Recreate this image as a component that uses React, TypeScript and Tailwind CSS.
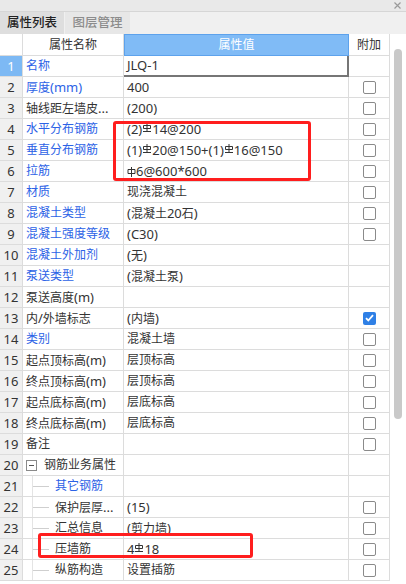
import type { ReactNode } from "react";

type Row = { n: number; name: string; blue?: boolean; value?: string; cb?: "on" | "off"; tree?: "group" | "leaf" };

const rows: Row[] = [
  { n: 1,  name: "名称", blue: true, value: "JLQ-1" },
  { n: 2,  name: "厚度(mm)", blue: true, value: "400", cb: "off" },
  { n: 3,  name: "轴线距左墙皮...", value: "(200)", cb: "off" },
  { n: 4,  name: "水平分布钢筋", blue: true, value: "(2)#14@200", cb: "off" },
  { n: 5,  name: "垂直分布钢筋", blue: true, value: "(1)#20@150+(1)#16@150", cb: "off" },
  { n: 6,  name: "拉筋", blue: true, value: " %6@600*600", cb: "off" },
  { n: 7,  name: "材质", blue: true, value: "现浇混凝土", cb: "off" },
  { n: 8,  name: "混凝土类型", blue: true, value: "(混凝土20石)", cb: "off" },
  { n: 9,  name: "混凝土强度等级", blue: true, value: "(C30)", cb: "off" },
  { n: 10, name: "混凝土外加剂", blue: true, value: "(无)" },
  { n: 11, name: "泵送类型", blue: true, value: "(混凝土泵)" },
  { n: 12, name: "泵送高度(m)" },
  { n: 13, name: "内/外墙标志", value: "(内墙)", cb: "on" },
  { n: 14, name: "类别", blue: true, value: "混凝土墙", cb: "off" },
  { n: 15, name: "起点顶标高(m)", value: "层顶标高", cb: "off" },
  { n: 16, name: "终点顶标高(m)", value: "层顶标高", cb: "off" },
  { n: 17, name: "起点底标高(m)", value: "层底标高", cb: "off" },
  { n: 18, name: "终点底标高(m)", value: "层底标高", cb: "off" },
  { n: 19, name: "备注", cb: "off" },
  { n: 20, name: "钢筋业务属性", tree: "group" },
  { n: 21, name: "其它钢筋", blue: true, tree: "leaf" },
  { n: 22, name: "保护层厚...", value: "(15)", cb: "off", tree: "leaf" },
  { n: 23, name: "汇总信息", value: "(剪力墙)", cb: "off", tree: "leaf" },
  { n: 24, name: "压墙筋", value: "4#18", cb: "off", tree: "leaf" },
  { n: 25, name: "纵筋构造", value: "设置插筋", cb: "off", tree: "leaf" },
];

// HRB400 rebar symbol
const Grade3 = () => (
  <svg width="10" height="9" viewBox="0 0 10 9" className="inline-block align-[2px]" fill="none" stroke="#333" strokeWidth="1">
    <path d="M5 0v8.5M1.5 2.5h7v3h-7zM1 8.5h8" />
  </svg>
);
// HPB300 rebar symbol
const Grade1 = () => (
  <svg width="9" height="10" viewBox="0 0 9 10" className="inline-block align-[-1px]" fill="none" stroke="#333" strokeWidth="1">
    <path d="M4.5 0v10M1 2.5h7v4h-7z" />
  </svg>
);

const cjk = /[\u2e80-\u9fff\uff00-\uffef]/;

// latin runs a touch larger than the CJK ones, like YaHei does
function runs(s: string, k: string): ReactNode[] {
  const out: ReactNode[] = [];
  let buf = "", isC: boolean | null = null, i = 0;
  const flush = () => {
    if (!buf) return;
    out.push(isC ? <span key={k + i++}>{buf}</span> : <span key={k + i++} className="text-[13px]">{buf}</span>);
    buf = "";
  };
  for (const ch of s) {
    const c = cjk.test(ch);
    if (isC !== null && c !== isC) flush();
    isC = c; buf += ch;
  }
  flush();
  return out;
}

function renderValue(v: string): ReactNode[] {
  const out: ReactNode[] = [];
  let buf = "";
  [...v].forEach((ch, i) => {
    if (ch === "#" || ch === "%") {
      if (buf) out.push(...runs(buf, "r" + i));
      buf = "";
      out.push(ch === "#" ? <Grade3 key={i} /> : <Grade1 key={i} />);
    } else buf += ch;
  });
  if (buf) out.push(...runs(buf, "end"));
  return out;
}

function Check({ on }: { on: boolean }) {
  return on ? (
    <div className="w-[13px] h-[13px] rounded-[2px] bg-[#2f80e6] flex items-center justify-center">
      <svg width="9" height="8" viewBox="0 0 9 8" fill="none" stroke="white" strokeWidth="1.8"><path d="M1 4.2l2.3 2.3L8 1.2" /></svg>
    </div>
  ) : (
    <div className="w-[13px] h-[13px] rounded-[2px] border border-[#8a8a8a] bg-white" />
  );
}

const line = "border-[#dcdcdc]";

export default function App() {
  return (
    <div className="relative w-[406px] h-[584px] bg-white overflow-hidden text-[12px] text-[#333] font-['Noto_Sans','Noto_Sans_CJK_SC',sans-serif] leading-none">
      {/* window bar */}
      <div className="h-[12px] bg-[#e9e9e9] border-b border-[#d6d6d6] flex justify-end items-center pr-[5px]">
        <svg width="7" height="7" viewBox="0 0 7 7" stroke="#9a9a9a" strokeWidth="1.2"><path d="M0.5 0.5l6 6M6.5 0.5l-6 6" /></svg>
      </div>
      {/* tabs */}
      <div className="h-[22px] bg-[#f0f0f0] flex gap-px">
        <div className="w-[64px] bg-[#dedede] flex items-center justify-center text-[#222] text-[12.5px] font-medium">属性列表</div>
        <div className="w-[65px] bg-[#e7e7e7] flex items-center justify-center text-[#8c8c8c] text-[12.5px] font-medium">图层管理</div>
      </div>
      <div className="flex">
        <div className="w-[390px]">
          {/* header */}
          <div className="flex h-[22px]">
            <div className={`w-[23px] border-r border-b ${line}`} />
            <div className={`w-[101px] border-r border-b ${line} flex items-center justify-center`}>属性名称</div>
            <div className="w-[225px] bg-[#80bbf6] border border-[#5da2ec] flex items-center justify-center text-white">属性值</div>
            <div className={`w-[41px] border-r border-b ${line} flex items-center justify-center`}>附加</div>
          </div>
          {rows.map(r => (
            <div key={r.n} className="flex h-[21px]">
              <div className={`w-[23px] border-r border-b ${line} flex items-center justify-center text-[13px] ${r.n === 1 ? "bg-[#7db9f4] text-white" : "bg-[#f0f0f0] text-[#333]"}`}>{r.n}</div>
              <div className={`w-[101px] border-r border-b ${line} flex items-center overflow-hidden whitespace-nowrap ${r.blue ? "text-[#2c62e6]" : "text-[#333]"}`}>
                {r.tree === "group" && (
                  <>
                    <span className="ml-[3px] w-[11px] h-[11px] border border-[#8a8a8a] flex items-center justify-center">
                      <span className="w-[5px] h-px bg-[#555]" />
                    </span>
                    <span className="ml-[7px]">{r.name}</span>
                  </>
                )}
                {r.tree === "leaf" && (
                  <>
                    <span className="ml-[9px] w-px h-full bg-[#e4e4e4]" />
                    <span className="w-[16px] h-px bg-[#cfcfcf]" />
                    <span className="ml-[6px]">{runs(r.name, "n")}</span>
                  </>
                )}
                {!r.tree && <span className="pl-[3px]">{runs(r.name, "n")}</span>}
              </div>
              <div className={`w-[225px] flex items-center pl-[3px] whitespace-nowrap ${r.n === 1 ? "border-r-2 border-b-2 border-[#767676]" : `border-r border-b ${line}`}`}>
                {r.value ? <span>{renderValue(r.value)}</span> : null}
              </div>
              <div className={`w-[41px] border-r border-b ${line} flex items-center justify-center`}>
                {r.cb && <Check on={r.cb === "on"} />}
              </div>
            </div>
          ))}
        </div>
        {/* scrollbar */}
        <div className="w-[16px] pt-[15px]">
          <div className="ml-[4px] w-[8px] h-[370px] rounded-full bg-[#c9c9c9]" />
        </div>
      </div>
      {/* annotation boxes */}
      <div className="absolute left-[113px] top-[121px] w-[198px] h-[60px] border-[3px] border-[#ff1e1e] rounded-[3px]" />
      <div className="absolute left-[38px] top-[533px] w-[215px] h-[25px] border-[3px] border-[#ff1e1e] rounded-[3px]" />
    </div>
  );
}
